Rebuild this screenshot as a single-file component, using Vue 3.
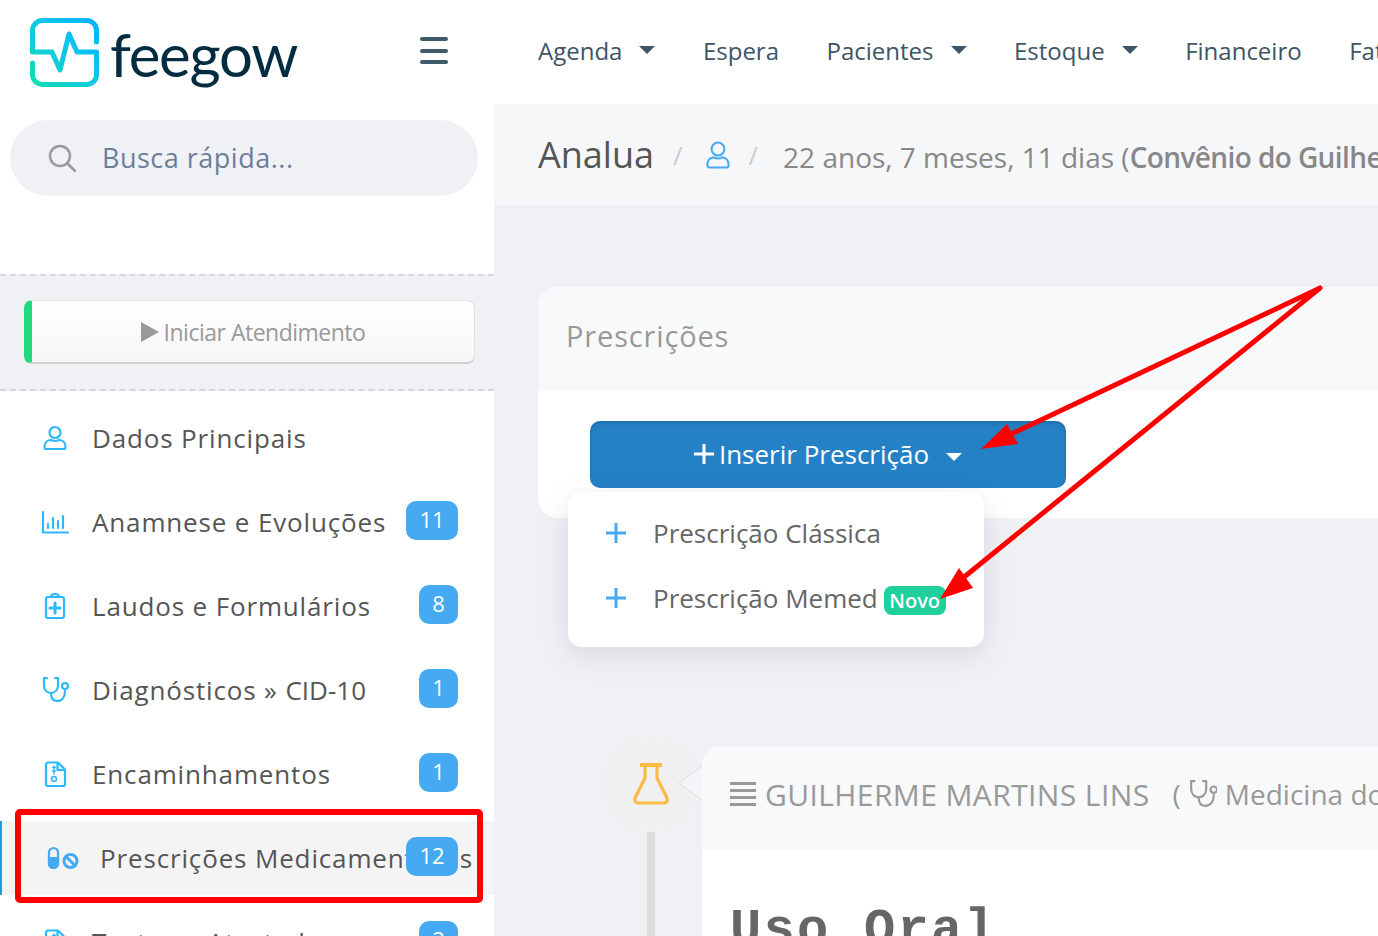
<template>
  <div class="page">
    <aside class="sidebar">
      <div class="brand">
        <div class="logo">
          <svg class="logo-mark" viewBox="0 0 69 69" width="69" height="69" fill="none">
            <defs>
              <linearGradient id="logoGrad" x1="0" y1="1" x2="1" y2="0">
                <stop offset="0" stop-color="#12dcb4" />
                <stop offset="0.6" stop-color="#0cc4ee" />
                <stop offset="1" stop-color="#00b4ff" />
              </linearGradient>
            </defs>
            <path
              d="M66.500 24 V12 A10 10 0 0 0 56.500 2.500 H12 A10 10 0 0 0 2.500 12 V34 H22 L30 52 L39 16 L47 34 H66.500 V57 A10 10 0 0 1 56.500 66.500 H12 A10 10 0 0 1 2.500 57 V45"
              stroke="url(#logoGrad)"
              stroke-width="5"
              stroke-linecap="round"
              stroke-linejoin="round"
            />
          </svg>
          <span class="logo-text">feegow</span>
        </div>
        <div class="burger"><span></span><span></span><span></span></div>
      </div>

      <div class="search">
        <svg viewBox="0 0 28 28" width="28" height="28" fill="none" stroke="#9a9a9a" stroke-width="2.500" stroke-linecap="round">
          <circle cx="12" cy="12" r="10" />
          <path d="M19.500 19.500 L27 27" />
        </svg>
        <span>Busca rápida...</span>
      </div>

      <div class="start-box">
        <div class="start-btn">
          <svg viewBox="0 0 18 20" width="18" height="20"><path d="M0 0 L18 10 L0 20 Z" fill="#999" /></svg>
          <span>Iniciar Atendimento</span>
        </div>
      </div>

      <nav class="side-nav">
        <div v-for="item in sideItems" :key="item.label" class="side-item" :class="{ active: item.active }">
          <svg class="side-icon" viewBox="0 0 26 26" width="26" height="26" fill="none" stroke="#2bb8ff" stroke-width="2.200" stroke-linecap="round" stroke-linejoin="round">
            <template v-if="item.icon === 'user'">
              <circle cx="13" cy="7.500" r="5.500" />
              <path d="M4 24 Q2.500 24 2.500 22 C2.500 17 6 15 9 15 Q13 17 17 15 C20 15 23.500 17 23.500 22 Q23.500 24 22 24 Z" />
            </template>
            <template v-else-if="item.icon === 'chart'">
              <path d="M1 3 V23.500 H26" />
              <path d="M6 19 V15 M11 19 V9 M16 19 V12 M21 19 V7" />
            </template>
            <template v-else-if="item.icon === 'clip'">
              <rect x="4" y="4" width="18" height="21" rx="2" />
              <path d="M9 4 Q9 1 13 1 Q17 1 17 4" />
              <path d="M13 10 V20 M8 15 H18" stroke-width="3" />
            </template>
            <template v-else-if="item.icon === 'steth'">
              <path d="M5 1 H2 V8 C2 13 5 16 9 16 C13 16 16 13 16 8 V1 H13" />
              <path d="M9 16 C9 21 11 24 15 24 C20 24 23 20 23 14" />
              <circle cx="23" cy="9" r="3" />
            </template>
            <template v-else-if="item.icon === 'file'">
              <path d="M6 1.500 H16 L23 8.500 V23 Q23 25 21 25 H6 Q4 25 4 23 V3.500 Q4 1.500 6 1.500 Z" />
              <path d="M15.500 2 V9 H22.500" />
              <path d="M12 5 V13 M10.500 6.500 H13.500 M10.500 10 H13.500" stroke-width="1.500" />
              <circle cx="12" cy="18" r="2.500" stroke-width="1.500" />
            </template>
            <template v-else-if="item.icon === 'pills'">
              <rect x="-1" y="3" width="9" height="20" rx="4.500" stroke="#45aaf2" />
              <path d="M-1 13 H8 V18.500 A4.500 4.500 0 0 1 -1 18.500 Z" fill="#45aaf2" stroke="#45aaf2" />
              <circle cx="20.500" cy="16" r="6.500" stroke="#45aaf2" stroke-width="3" />
              <path d="M16 11.500 L25 20.500" stroke="#45aaf2" stroke-width="3" />
            </template>
          </svg>
          <span class="side-label">{{ item.label }}<small v-if="item.tail">{{ item.tail }}</small></span>
          <span class="side-badge" :class="{ wide: item.count > 9 }">{{ item.count }}</span>
        </div>
      </nav>
    </aside>

    <main class="main">
      <header class="topbar">
        <div v-for="link in topLinks" :key="link.label" class="top-link">
          {{ link.label }}<i v-if="link.caret" class="caret"></i>
        </div>
      </header>

      <div class="patient">
        <h1>Analua</h1>
        <span class="slash">/</span>
        <svg class="patient-icon" viewBox="0 0 26 30" width="24" height="30" fill="none" stroke="#45aaf2" stroke-width="2.200" stroke-linejoin="round">
          <circle cx="13" cy="8.500" r="7" />
          <path d="M4 28.500 Q1.500 28.500 1.500 26 C1.500 20 5 18 8.500 17.500 Q13 20 17.500 17.500 C21 18 24.500 20 24.500 26 Q24.500 28.500 22 28.500 Z" />
        </svg>
        <span class="slash">/</span>
        <p class="age">22 anos, 7 meses, 11 dias (<b>Convênio do Guilherme</b>)</p>
      </div>

      <div class="content">
        <section class="card">
          <div class="card-title">Prescrições</div>
          <div class="card-body">
            <div class="insert">
              <button class="insert-btn">
                <svg class="insert-plus" viewBox="0 0 20 20" width="20" height="20"><path d="M10 0 V20 M0 10 H20" stroke="#fff" stroke-width="3" /></svg>
                <span>Inserir Prescrição</span>
                <i class="caret white"></i>
              </button>
              <div class="dropdown">
                <div class="drop-item">
                  <svg viewBox="0 0 20 20" width="20" height="20"><path d="M10 0 V20 M0 10 H20" stroke="#45aaf2" stroke-width="3" /></svg>
                  <span>Prescrição Clássica</span>
                </div>
                <div class="drop-item">
                  <svg viewBox="0 0 20 20" width="20" height="20"><path d="M10 0 V20 M0 10 H20" stroke="#45aaf2" stroke-width="3" /></svg>
                  <span>Prescrição Memed</span>
                  <em class="novo">Novo</em>
                </div>
              </div>
            </div>
          </div>
        </section>

        <section class="timeline">
          <div class="time-col">
            <div class="time-node">
              <svg viewBox="0 0 36 42" width="36" height="42" fill="none" stroke="#f9bb45" stroke-width="3.200" stroke-linejoin="round">
                <path d="M7 2 H29" stroke-width="4" />
                <path d="M12 3 V15 L2 35 Q1 40 5 40 H31 Q35 40 34 35 L24 15 V3" />
              </svg>
            </div>
            <div class="time-line"></div>
          </div>
          <article class="entry">
            <svg class="notch" viewBox="0 0 24 34" width="24" height="34">
              <path d="M24 0 L1 17 L24 34 Z" fill="#f4f5f8" />
              <path d="M24 0 L1 17 L24 34" fill="none" stroke="#dcdde0" />
            </svg>
            <div class="entry-head">
              <div class="lines"><span></span><span></span><span></span><span></span></div>
              <span class="doctor">GUILHERME MARTINS LINS</span>
              <span class="spec">(
                <svg viewBox="0 0 26 26" width="28" height="28" fill="none" stroke="#999" stroke-width="2" stroke-linecap="round" stroke-linejoin="round">
                  <path d="M5 1 H2 V8 C2 13 5 16 9 16 C13 16 16 13 16 8 V1 H13" />
                  <path d="M9 16 C9 21 11 24 15 24 C20 24 23 20 23 14" />
                  <circle cx="23" cy="9" r="3" />
                </svg>
                Medicina do Trabalho
              </span>
            </div>
            <div class="entry-body">Uso Oral</div>
          </article>
        </section>
      </div>
    </main>

    <!-- anotacoes em vermelho por cima da tela -->
    <svg class="marks" viewBox="0 0 1378 936" width="1378" height="936" fill="none">
      <rect x="18" y="812" width="462" height="88" rx="2" stroke="#f00" stroke-width="6" />
      <path d="M1320 288 L1005 437 M1320 288 L958 582" stroke="#f00" stroke-width="5" stroke-linecap="round" />
      <path d="M981 449 L1007 424 L1018 444 Z" fill="#f00" />
      <path d="M940 599 L959 568 L973 588 Z" fill="#f00" />
    </svg>
  </div>
</template>

<script setup>
const sideItems = [
  { label: 'Dados Principais', icon: 'user' },
  { label: 'Anamnese e Evoluções', icon: 'chart', count: 11 },
  { label: 'Laudos e Formulários', icon: 'clip', count: 8 },
  { label: 'Diagnósticos » ', tail: 'CID-10', icon: 'steth', count: 1 },
  { label: 'Encaminhamentos', icon: 'file', count: 1 },
  { label: 'Prescrições Medicamentosas', icon: 'pills', count: 12, active: true },
  { label: 'Textos e Atestados', icon: 'file', count: 2 }
]

const topLinks = [
  { label: 'Agenda', caret: true },
  { label: 'Espera' },
  { label: 'Pacientes', caret: true },
  { label: 'Estoque', caret: true },
  { label: 'Financeiro' },
  { label: 'Faturamento' }
]
</script>

<style>
html, body { margin: 0; overflow: hidden; }
</style>

<style scoped>
.page {
  position: relative;
  display: flex;
  width: 1378px;
  height: 936px;
  overflow: hidden;
  background: #f0f1f5;
  font-family: "Open Sans", sans-serif;
}

/* Sidebar */
.sidebar { flex: 0 0 494px; background: #fff; }
.brand { display: flex; align-items: flex-start; height: 120px; }
.logo { display: flex; margin: 18px 0 0 30px; width: 390px; }
.logo-text {
  margin: -7px 0 0 11px;
  font-family: "Lato", sans-serif;
  font-size: 60px;
  line-height: 86px;
  letter-spacing: -1.300px;
  color: #042c40;
}
.burger { display: flex; flex-direction: column; gap: 7.500px; margin-top: 37px; }
.burger span { display: block; width: 28px; height: 4px; border-radius: 2px; background: #3f5a6b; }

.search {
  display: flex;
  align-items: center;
  gap: 26px;
  height: 76px;
  margin: 0 16px 0 10px;
  padding-left: 38px;
  border-radius: 38px;
  background: #f0f1f5;
  font-size: 27px;
  letter-spacing: 0.500px;
  line-height: 74px;
  color: #6b7f9b;
}

.start-box {
  margin-top: 78px;
  padding: 24px 19px 25px 24px;
  border-top: 2px dashed #d6d7db;
  border-bottom: 2px dashed #d6d7db;
  background: #f0f1f5;
}
.start-btn {
  display: flex;
  align-items: center;
  justify-content: center;
  gap: 5px;
  box-sizing: border-box;
  height: 64px;
  border: 1px solid #e2e2e2;
  border-bottom: 2px solid #d0d0d0;
  border-left: 8px solid #22d97d;
  border-radius: 8px;
  background: linear-gradient(#fff, #f6f6f6);
  font-size: 23px;
  letter-spacing: -0.500px;
  color: #999;
}

.side-nav { padding-top: 10px; }
.side-item {
  position: relative;
  display: flex;
  align-items: center;
  gap: 24px;
  height: 74px;
  margin-bottom: 10px;
  padding-left: 42px;
  font-size: 26px;
  letter-spacing: 0.850px;
  color: #555;
  white-space: nowrap;
}
.side-item.active {
  padding-left: 50px;
  background: #f4f4f5;
  box-shadow: inset 2px 0 0 #1a9fe0;
}
.side-icon { flex: none; overflow: visible; }
.side-label small { font-size: 26px; letter-spacing: 0; }
.side-badge {
  position: absolute;
  top: 16px;
  right: 36px;
  box-sizing: border-box;
  width: 39px;
  height: 39px;
  border-radius: 10px;
  background: #45aaf2;
  font-size: 22px;
  line-height: 37px;
  letter-spacing: 0;
  text-align: center;
  color: #fff;
}
.side-badge.wide { width: 52px; }
.side-item:first-child .side-badge { display: none; }

/* Main */
.main { flex: 1; min-width: 0; overflow: hidden; }
.topbar {
  display: flex;
  align-items: center;
  gap: 47.500px;
  box-sizing: border-box;
  height: 104px;
  padding: 0 0 4px 44px;
  background: #fff;
  font-size: 24px;
  color: #3d5566;
  white-space: nowrap;
}
.top-link { display: flex; align-items: center; }
.caret {
  width: 0;
  height: 0;
  margin-left: 17px;
  border-top: 8px solid #3d5566;
  border-left: 8px solid transparent;
  border-right: 8px solid transparent;
}
.caret.white { border-top-color: #fff; }

.patient {
  display: flex;
  align-items: center;
  height: 101px;
  padding-left: 44px;
  background: #f6f7f9;
  white-space: nowrap;
}
.patient h1 { margin: 0; font-size: 36px; font-weight: 400; color: #555; }
.patient-icon { flex: none; }
.slash { margin: 0 23px 0 19px; font-size: 26px; color: #ccc; }
.age { margin: 5px 0 0 2px; font-size: 28px; color: #888; }
.age b { font-weight: 600; letter-spacing: -0.600px; }

.content { padding: 82px 0 0 44px; }
.card { margin-right: -40px; border-radius: 20px; background: #fff; }
.card-title {
  height: 104px;
  padding-left: 28px;
  border-radius: 20px 20px 0 0;
  background: #f8f9fa;
  font-size: 29px;
  line-height: 98px;
  letter-spacing: 0.850px;
  color: #999;
}
.card-body { height: 127px; padding: 30px 0 0 52px; box-sizing: border-box; }
.insert { position: relative; width: 476px; }
.insert-btn {
  display: flex;
  align-items: center;
  justify-content: center;
  gap: 7px;
  width: 100%;
  height: 67px;
  padding: 0 0 2px;
  border: 0;
  border-radius: 10px;
  background: #2481c5;
  box-shadow: inset 0 3px 4px rgba(0, 0, 0, 0.12);
  font-family: inherit;
  font-size: 26px;
  color: #fff;
}
.insert-plus { margin-right: -2px; }
.insert-btn .caret { margin-left: 10px; margin-top: 6px; }

.dropdown {
  position: absolute;
  top: 71px;
  left: -22px;
  z-index: 3;
  box-sizing: border-box;
  width: 416px;
  height: 155px;
  padding-top: 8px;
  border-radius: 14px;
  background: #fff;
  box-shadow: 0 8px 30px rgba(60, 70, 90, 0.14);
}
.drop-item {
  display: flex;
  align-items: center;
  height: 65px;
  padding-left: 38px;
  font-size: 26px;
  color: #666;
  white-space: nowrap;
}
.drop-item span { margin-left: 27px; }
.novo {
  height: 29px;
  margin: 5px 0 0 6px;
  padding: 0 5.500px;
  border-radius: 8px;
  background: #1fcf9c;
  font-size: 20px;
  font-style: normal;
  font-weight: 600;
  line-height: 29px;
  color: #fff;
}

.timeline { display: flex; gap: 4px; margin-top: 218px; padding-left: 66px; }
.time-col { display: flex; flex-direction: column; align-items: center; flex: 0 0 94px; }
.time-node {
  display: flex;
  align-items: center;
  justify-content: center;
  width: 94px;
  height: 96px;
  border-radius: 50%;
  background: #f0f0f0;
}
.time-line { width: 8px; height: 200px; background: #dddddd; }

.entry { position: relative; flex: 1; margin: 10px -40px 0 0; background: #fff; border-radius: 20px 0 0 0; }
.notch { position: absolute; top: 20px; left: -24px; }
.entry-head {
  display: flex;
  align-items: center;
  box-sizing: border-box;
  height: 104px;
  padding: 0 0 8px 28px;
  border-radius: 20px 0 0 0;
  background: #f8f9fa;
  color: #999;
  white-space: nowrap;
}
.lines { display: flex; flex-direction: column; gap: 4px; margin-right: 9px; }
.lines span { display: block; width: 26px; height: 3px; background: #999; }
.doctor { font-size: 30px; letter-spacing: 0.400px; }
.spec { display: flex; align-items: center; gap: 8px; margin-left: 23px; font-size: 28px; }
.spec svg { flex: none; }
.entry-body {
  padding: 51px 0 0 28px;
  font-family: "Liberation Mono", monospace;
  font-size: 52px;
  font-weight: 700;
  letter-spacing: 2.300px;
  line-height: 60px;
  color: #666;
}

.marks { position: absolute; top: 0; left: 0; z-index: 5; pointer-events: none; }
</style>
